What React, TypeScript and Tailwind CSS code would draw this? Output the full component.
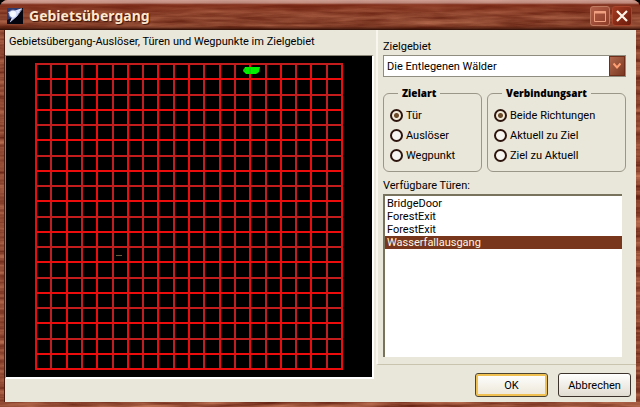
import { useState } from 'react';

const CELLS = 20;
const lines = Array.from({ length: CELLS + 1 }, (_, i) => i);

const areas = ['Die Entlegenen Wälder'];

const doors = [
  { id: 'd1', label: 'BridgeDoor' },
  { id: 'd2', label: 'ForestExit' },
  { id: 'd3', label: 'ForestExit' },
  { id: 'd4', label: 'Wasserfallausgang' }
];

// Wood grain behind the window frame
function WoodGrain() {
  return (
    <svg className="absolute inset-0 h-full w-full" aria-hidden="true">
      <defs>
        <filter id="grain" x="0" y="0" width="100%" height="100%" colorInterpolationFilters="sRGB">
          <feTurbulence type="fractalNoise" baseFrequency="0.018 0.2" numOctaves="4" seed="8" />
          <feColorMatrix values="0.5 0 0 0 0.32  0.46 0 0 0 0.06  0.38 0 0 0 0.01  0 0 0 0 1" />
        </filter>
        <linearGradient id="bevel" x1="0" y1="0" x2="0" y2="1">
          <stop offset="0" stopColor="#d8aaa0" stopOpacity="0.9" />
          <stop offset="0.1" stopColor="#c9978c" stopOpacity="0.8" />
          <stop offset="0.16" stopColor="#7a2412" stopOpacity="0.7" />
          <stop offset="0.45" stopColor="#7a2c18" stopOpacity="0.3" />
          <stop offset="0.85" stopColor="#6a2c18" stopOpacity="0.2" />
          <stop offset="1" stopColor="#260903" stopOpacity="1" />
        </linearGradient>
      </defs>
      <rect width="100%" height="100%" fill="#8d4935" />
      <rect width="100%" height="100%" filter="url(#grain)" />
      <rect width="100%" height="30" fill="url(#bevel)" />
    </svg>
  );
}

function AppIcon() {
  return (
    <svg className="h-4 w-4" viewBox="0 0 16 16" aria-hidden="true">
      <defs>
        <radialGradient id="star">
          <stop offset="0" stopColor="#ffffff" />
          <stop offset="0.6" stopColor="#eef2ff" />
          <stop offset="1" stopColor="#7f8fd8" stopOpacity="0" />
        </radialGradient>
      </defs>
      <rect width="16" height="16" fill="#0b0b1c" />
      <path d="M0 0H13L9 8L0 12Z" fill="#4a5ba4" opacity="0.6" />
      <path d="M15 0L10 8L3 14L5 9L1 4L7 3Z" fill="#dfe5ff" />
      <circle cx="6" cy="6" r="5" fill="url(#star)" />
      <path d="M16 1V16H2L10 9Z" fill="#050510" />
      <path d="M15 1L10 8L3 14" stroke="#c8d0f4" strokeWidth="0.8" fill="none" />
    </svg>
  );
}

function AreaMap() {
  return (
    <svg className="block w-full" viewBox="0 0 366 321" role="img" aria-label="Zielgebiet">
      <rect width="366" height="321" fill="#000000" />
      {lines.map((i) => (
        <path
          key={`v${i}`}
          d={`M${30 + Math.round(i * 15.3)} 8V314`}
          stroke={i % 2 ? '#bc2020' : '#ec0c0c'}
          strokeWidth="2"
        />
      ))}
      {lines.map((i) => (
        <path
          key={`h${i}`}
          d={`M29 ${8 + Math.round(i * 15.25)}H337`}
          stroke={i % 2 || i === CELLS ? '#ec0c0c' : '#c41c1c'}
          strokeWidth="2"
        />
      ))}
      <path d="M239 11H254L253 16L250 18H240L237 15Z" fill="#00f000" />
      <path d="M244 12V18M237 14H240" stroke="#10c010" strokeWidth="1" />
      <path d="M110 199.500H116" stroke="#6b5a3c" strokeWidth="1" />
    </svg>
  );
}

type GroupProps = {
  title: string;
  name: string;
  options: string[];
  className: string;
};

function RadioGroup({ title, name, options, className }: GroupProps) {
  const [value, setValue] = useState(options[0]);

  return (
    <fieldset className={`rounded-md border border-[#9a9788] pb-[6px] pl-[6px] ${className}`}>
      <legend className="ml-2 px-1 font-['Open_Sans',sans-serif] text-[10px] leading-3 font-extrabold">{title}</legend>
      <div className="flex flex-col pt-[6px]">
        {options.map((option) => (
          <label key={option} className="flex h-5 items-center gap-[3px] whitespace-nowrap">
            <input
              type="radio"
              name={name}
              checked={value === option}
              onChange={() => setValue(option)}
              className="h-[13px] w-[13px] shrink-0 appearance-none rounded-full border-2 border-[#2e160e] bg-[#f8f6f0] checked:bg-[radial-gradient(circle,#6b4a2a_0,#6b4a2a_2px,#f1ead8_3px)]"
            />
            {option}
          </label>
        ))}
      </div>
    </fieldset>
  );
}

export default function App() {
  const [area, setArea] = useState(areas[0]);
  const [door, setDoor] = useState('d4');

  return (
    <div className="relative flex min-h-screen flex-col overflow-hidden bg-black font-['Roboto',sans-serif] text-[11px] leading-[13px] text-black">
      <div className="relative flex flex-1 flex-col overflow-hidden rounded-t-lg px-1 pb-[5px]">
        <WoodGrain />

        {/* Title bar */}
        <header className="relative flex h-[30px] shrink-0 items-center gap-[6px] pt-[2px] pr-1 pl-[3px]">
          <AppIcon />
          <h1 className="flex-1 font-['Noto_Sans',sans-serif] text-[14px] leading-5 font-bold text-[#ffe6cc] [text-shadow:1px_1px_1px_#3a1208]">
            Gebietsübergang
          </h1>
          <div className="flex gap-[2px]">
            <button
              type="button"
              aria-label="Maximieren"
              className="flex h-5 w-5 items-center justify-center rounded-[3px] border border-[#c07a62] bg-linear-to-br from-[#b3604a] to-[#8d3c28]"
            >
              <svg className="h-3 w-3" viewBox="0 0 12 12" fill="none" stroke="#f0a080">
                <path d="M0.500 1.500H11.500V11.500H0.500Z" />
                <path d="M0 2.500H12" strokeWidth="2" />
              </svg>
            </button>
            <button
              type="button"
              aria-label="Schließen"
              className="flex h-5 w-5 items-center justify-center rounded-[3px] border border-[#a8452c] bg-linear-to-br from-[#a23a22] to-[#6e1c0c]"
            >
              <svg className="h-3 w-3" viewBox="0 0 12 12" fill="none" stroke="#fff4e6" strokeWidth="2.200">
                <path d="M1 1L11 11M11 1L1 11" />
              </svg>
            </button>
          </div>
        </header>

        <main className="relative flex flex-1 border-l border-[#4a1c10] bg-[#e9e6da]">
          {/* Map of the target area */}
          <section className="min-w-0 flex-1 pr-[2px]">
            <p className="h-[25px] pt-[5px] pl-1 whitespace-nowrap">
              Gebietsübergang-Auslöser, Türen und Wegpunkte im Zielgebiet
            </p>
            <div className="border-t border-r-2 border-b-2 border-l border-t-[#8a8778] border-r-white border-b-white border-l-[#8a8778]">
              <AreaMap />
            </div>
          </section>

          <form className="flex w-[260px] shrink-0 flex-col" onSubmit={(e) => e.preventDefault()}>
            <div className="flex flex-1 flex-col border-b border-l-2 border-b-[#c9c4ae] border-l-[#f8f6ee] pt-[10px] pr-[10px] pb-[7px] pl-[5px]">
              <label htmlFor="area">Zielgebiet</label>
              <div className="relative mt-[2px]">
                <select
                  id="area"
                  value={area}
                  onChange={(e) => setArea(e.target.value)}
                  className="block h-[22px] w-full appearance-none border border-[#8f8c80] bg-white pl-[3px]"
                >
                  {areas.map((name) => (
                    <option key={name}>{name}</option>
                  ))}
                </select>
                <span className="pointer-events-none absolute inset-y-px right-px flex w-4 items-center justify-center border border-[#6e2e1a] bg-linear-to-br from-[#b0694e] to-[#7c3822]">
                  <svg className="h-2 w-2" viewBox="0 0 8 8" fill="none" stroke="#ff9f74" strokeWidth="2">
                    <path d="M0.500 1.500L4 5.500L7.500 1.500" />
                  </svg>
                </span>
              </div>

              <div className="mt-[10px] flex gap-[5px]">
                <RadioGroup title="Zielart" name="kind" options={['Tür', 'Auslöser', 'Wegpunkt']} className="w-[99px]" />
                <RadioGroup
                  title="Verbindungsart"
                  name="link"
                  options={['Beide Richtungen', 'Aktuell zu Ziel', 'Ziel zu Aktuell']}
                  className="min-w-0 flex-1"
                />
              </div>

              <label htmlFor="doors" className="mt-[7px]">
                Verfügbare Türen:
              </label>
              <select
                id="doors"
                size={4}
                value={door}
                onChange={(e) => setDoor(e.target.value)}
                className="mt-[2px] mr-1 flex-1 appearance-none overflow-hidden border-t-2 border-l-2 border-[#77735c] bg-white pt-px"
              >
                {doors.map((item) => (
                  <option
                    key={item.id}
                    value={item.id}
                    className="h-[13px] min-h-0 p-0 pl-[2px] leading-[13px] checked:bg-[#78371d] checked:bg-[linear-gradient(#78371d,#78371d)] checked:text-[#fff4e0]"
                  >
                    {item.label}
                  </option>
                ))}
              </select>
            </div>

            <div className="flex justify-end gap-[10px] pt-2 pr-[5px] pb-[5px]">
              <button
                type="submit"
                className="h-6 w-[73px] rounded-[3px] border border-[#4c4430] bg-linear-to-b from-white to-[#ece6d6] inset-ring-2 inset-ring-[#f0c050]"
              >
                OK
              </button>
              <button
                type="button"
                className="h-6 w-[73px] rounded-[3px] border border-[#3c342c] bg-linear-to-b from-white to-[#e2ddd2]"
              >
                Abbrechen
              </button>
            </div>
          </form>
        </main>
      </div>
    </div>
  );
}
